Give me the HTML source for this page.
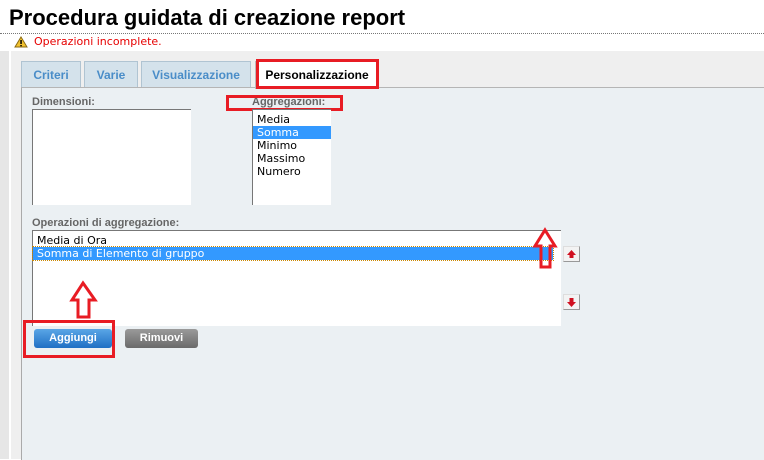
<!DOCTYPE html>
<html><head><meta charset="utf-8"><style>
body{margin:0;width:764px;height:459px;overflow:hidden;background:#fff;font-family:"Liberation Sans",Arial,sans-serif;position:relative}
.a{position:absolute}
h1{position:absolute;left:9px;top:5px;margin:0;font-size:22px;font-weight:bold;letter-spacing:0;color:#000}
.tab{position:absolute;top:61px;height:26px;background:#d4e2eb;border:1px solid #b0c4d2;border-bottom:none;box-sizing:border-box;color:#4a8dc8;font-weight:bold;font-size:12px;line-height:26px;text-align:center}
.lbl{position:absolute;font-size:11px;font-weight:bold;color:#666}
.box{position:absolute;background:#fff;border-top:1px solid #777;border-left:1px solid #777;box-sizing:border-box;font-family:"DejaVu Sans",sans-serif;font-size:11px;color:#000}
.it{height:13px;line-height:13px;padding-left:4px;white-space:nowrap}
.sel{background:#3399ff;color:#fff}
.rb{position:absolute;border:3px solid #e81c24;box-sizing:border-box}
.btn{position:absolute;height:19px;border-radius:3px;color:#fff;font-weight:bold;font-size:11px;line-height:19px;text-align:center}
.ab{position:absolute;width:17px;height:16px;background:#f3f3f3;border:1px solid #999;border-top-color:#ddd;border-left-color:#ddd;box-sizing:border-box}
</style></head><body>
<h1>Procedura guidata di creazione report</h1>
<div class="a" style="left:0;top:33px;width:764px;border-top:1px dotted #777"></div>
<svg class="a" style="left:14px;top:36px" width="14" height="12"><path d="M7 1 L13 11 L1 11 Z" fill="#f2c230" stroke="#8a6a10"/><rect x="6.3" y="4" width="1.5" height="4" fill="#000"/><rect x="6.3" y="9" width="1.5" height="1.3" fill="#000"/></svg>
<div class="a" style="left:34px;top:35px;color:#e60000;font-size:11px;font-family:'DejaVu Sans',sans-serif">Operazioni incomplete.</div>
<div class="a" style="left:0;top:51px;width:9px;height:408px;background:#e6e6e6"></div>
<div class="a" style="left:11px;top:51px;width:753px;height:408px;background:#efefef"></div>
<div class="a" style="left:21px;top:87px;width:743px;height:372px;background:#ebf0f3;border-top:1px solid #b5b5b5;border-left:1px solid #aaa"></div>
<div class="tab" style="left:21px;width:60px">Criteri</div>
<div class="tab" style="left:84px;width:54px">Varie</div>
<div class="tab" style="left:141px;width:110px">Visualizzazione</div>
<div class="tab" style="left:255px;width:124px;height:28px;background:#fff;color:#000;border-color:#bbb">Personalizzazione</div>
<div class="rb" style="left:256px;top:59px;width:123px;height:30px"></div>
<div class="lbl" style="left:32px;top:96px">Dimensioni:</div>
<div class="lbl" style="left:252px;top:96px">Aggregazioni:</div>
<div class="rb" style="left:226px;top:95px;width:117px;height:16px"></div>
<div class="box" style="left:32px;top:109px;width:159px;height:96px"></div>
<div class="box" style="left:252px;top:109px;width:79px;height:96px;padding-top:3px">
<div class="it">Media</div><div class="it sel">Somma</div><div class="it">Minimo</div><div class="it">Massimo</div><div class="it">Numero</div></div>
<div class="lbl" style="left:32px;top:217px">Operazioni di aggregazione:</div>
<div class="box" style="left:32px;top:230px;width:529px;height:96px;padding-top:3px">
<div class="it">Media di Ora</div><div class="it sel" style="margin-right:8px;outline:1px dotted #c80">Somma di Elemento di gruppo</div></div>
<div class="ab" style="left:563px;top:246px"><svg width="15" height="14"><path d="M7.5 3 L12 8 L9.5 8 L9.5 11 L5.5 11 L5.5 8 L3 8 Z" fill="#d01020"/></svg></div>
<div class="ab" style="left:563px;top:294px"><svg width="15" height="14"><path d="M7.5 12 L12 7 L9.5 7 L9.5 3 L5.5 3 L5.5 7 L3 7 Z" fill="#d01020"/></svg></div>
<svg class="a" style="left:68px;top:280px" width="32" height="40"><path d="M15 3 L27 20 L21 20 L21 37 L10 37 L10 20 L4 20 Z" fill="none" stroke="#e81c24" stroke-width="3"/></svg>
<svg class="a" style="left:532px;top:227px" width="28" height="44"><path d="M13 3 L23 19 L18 19 L18 40 L9 40 L9 19 L3 19 Z" fill="none" stroke="#e81c24" stroke-width="3"/></svg>
<div class="btn" style="left:34px;top:329px;width:78px;background:linear-gradient(#5aa6e6,#1f6fc4)">Aggiungi</div>
<div class="btn" style="left:125px;top:329px;width:73px;background:linear-gradient(#9a9a9a,#6a6a6a)">Rimuovi</div>
<div class="rb" style="left:23px;top:320px;width:92px;height:38px"></div>
</body></html>
